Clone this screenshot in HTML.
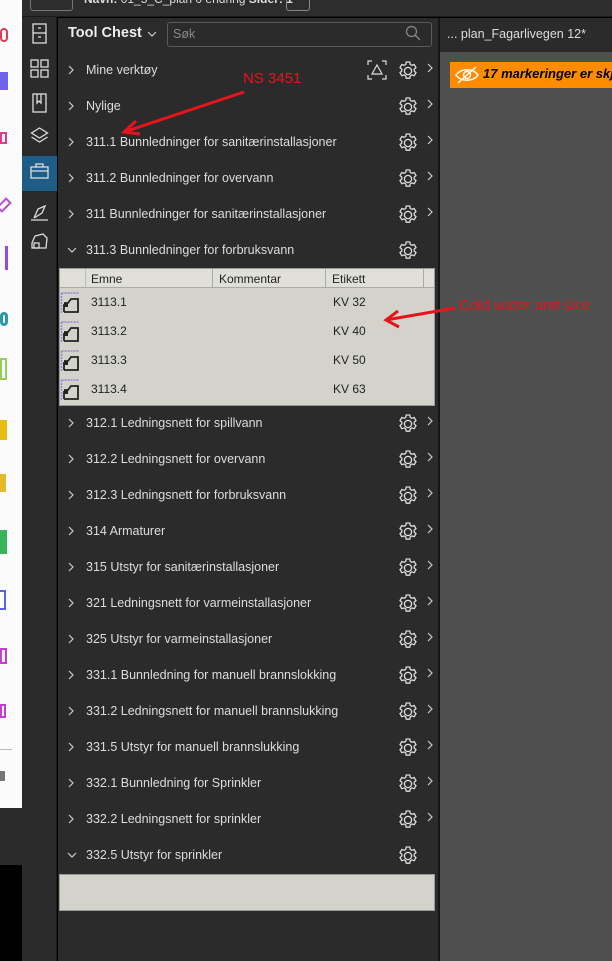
<!DOCTYPE html>
<html><head><meta charset="utf-8"><style>
*{margin:0;padding:0;box-sizing:border-box}
body{width:612px;height:961px;overflow:hidden;background:#000;font-family:"Liberation Sans",sans-serif;position:relative}
.a{position:absolute}
.row{position:absolute;left:58px;width:380px;height:36px;color:#ddd;font-size:12.5px;line-height:36px}
.row .c{position:absolute;left:9px;top:13px}
.row .t{position:absolute;left:28px}
.row svg.g{position:absolute;left:340px;top:9px}
.row .r{position:absolute;left:368px;top:11px}
.tr{position:absolute;left:59px;width:375px;height:29px;font-size:12px;color:#222;line-height:29px}
</style></head><body>
<svg width="0" height="0" style="position:absolute"><defs>
<g id="gear" fill="none" stroke="#ddd" stroke-width="1.3"><path d="M8.2 1h3.6l.5 2.4 1.6.9 2.3-.8 1.8 3.1-1.8 1.6v1.8l1.8 1.6-1.8 3.1-2.3-.8-1.6.9-.5 2.4H8.2l-.5-2.4-1.6-.9-2.3.8-1.8-3.1 1.8-1.6V8.2L2 6.6l1.8-3.1 2.3.8 1.6-.9z"/><circle cx="10" cy="10" r="3.6"/></g>
<path id="chr" d="M2 1l4 4-4 4" fill="none" stroke="#ccc" stroke-width="1.2"/>
<path id="chd" d="M1 3l4 4 4-4" fill="none" stroke="#ccc" stroke-width="1.2"/>
</defs></svg>
<!-- left white strip -->
<div class="a" style="left:0;top:0;width:22px;height:808px;background:#fbfbfb"></div>
<div class="a" style="left:0;top:808px;width:22px;height:57px;background:#2b2b2b"></div>
<div class="a" style="left:0;top:28px;width:8px;height:14px;border:2px solid #e23a55;border-radius:5px"></div>
<div class="a" style="left:0;top:72px;width:8px;height:18px;background:#6e62e8"></div>
<div class="a" style="left:0;top:132px;width:7px;height:12px;border:2px solid #e03c8a"></div>
<div class="a" style="left:0;top:198px;width:8px;height:14px;border:2px solid #b44bd6;transform:rotate(45deg)"></div>
<div class="a" style="left:0;top:246px;width:8px;height:24px;border-right:3px solid #9a4bd8"></div>
<div class="a" style="left:0;top:312px;width:8px;height:14px;border:3px solid #2a9aa8;border-radius:6px"></div>
<div class="a" style="left:0;top:358px;width:7px;height:22px;border:2px solid #8fcf5a"></div>
<div class="a" style="left:0;top:420px;width:7px;height:20px;background:#e8be10"></div>
<div class="a" style="left:0;top:474px;width:6px;height:18px;background:#e6b82a"></div>
<div class="a" style="left:0;top:530px;width:7px;height:24px;background:#38b35a"></div>
<div class="a" style="left:0;top:590px;width:6px;height:20px;border:2px solid #5a63e8;border-left:0"></div>
<div class="a" style="left:0;top:648px;width:7px;height:16px;border:2px solid #c040d0"></div>
<div class="a" style="left:0;top:704px;width:6px;height:14px;border:2px solid #c040d0"></div>
<div class="a" style="left:0;top:749px;width:12px;height:1px;background:#bbb"></div>
<div class="a" style="left:0;top:771px;width:5px;height:10px;background:#777"></div>

<!-- icon bar -->
<div class="a" style="left:22px;top:0;width:35px;height:961px;background:#2b2b2b;border-right:1px solid #1b1b1b"></div>
<div class="a" style="left:22px;top:156px;width:35px;height:35px;background:#1d5d86"></div>
<svg class="a" style="left:22px;top:18px" width="35" height="240" fill="none" stroke="#ddd" stroke-width="1.3">
<rect x="11" y="6" width="13" height="19"/><line x1="11" y1="15" x2="24" y2="15"/><line x1="16" y1="10" x2="19" y2="10"/><line x1="16" y1="19" x2="19" y2="19"/>
<rect x="9" y="42" width="7" height="7"/><rect x="19" y="42" width="7" height="7"/><rect x="9" y="52" width="7" height="7"/><rect x="19" y="52" width="7" height="7"/>
<rect x="11" y="76" width="13" height="18"/><path d="M15 76v9l2-2 2 2v-9"/>
<path d="M17.5 110l8 5-8 5-8-5z"/><path d="M9.5 119l8 5 8-5"/>
<rect x="9" y="149" width="17" height="11"/><path d="M14 149v-3h7v3M9 153h17"/>
<path d="M12 200l4-9 7-3-3 7-8 5M9 202h17"/>
<path d="M10 225l3-7 8-2 4 4-1 10-14 0z"/><rect x="12" y="225" width="5" height="5"/>
</svg>

<!-- top bar -->
<div class="a" style="left:22px;top:0;width:590px;height:17px;background:#2d2d2d;border-bottom:1px solid #1a1a1a;overflow:hidden">
<div class="a" style="left:8px;top:-6px;width:43px;height:17px;border:1px solid #777;border-radius:3px"></div>
<div class="a" style="left:62px;top:-8px;color:#ddd;font-size:12px;font-weight:bold;white-space:nowrap">Navn: <span style="font-weight:normal">01_5_C_plan 0 endring</span> Sider: 1</div>
<div class="a" style="left:264px;top:-6px;width:24px;height:17px;border:1px solid #888;border-radius:3px"></div>
</div>

<!-- main panel -->
<div class="a" style="left:58px;top:18px;width:380px;height:943px;background:#2b2b2b"></div>
<div class="a" style="left:438px;top:18px;width:2px;height:943px;background:#161616"></div>
<div class="a" style="left:68px;top:25px;color:#eee;font-size:14.5px;font-weight:bold">Tool Chest</div>
<svg class="a" style="left:147px;top:29px" width="10" height="10"><use href="#chd"/></svg>
<div class="a" style="left:167px;top:22px;width:265px;height:25px;border:1px solid #5a5a5a;border-radius:3px;background:#2b2b2b"></div>
<div class="a" style="left:173px;top:27px;color:#888;font-size:12.5px">Søk</div>
<svg class="a" style="left:405px;top:25px" width="16" height="16" fill="none" stroke="#888" stroke-width="1.3"><circle cx="6.5" cy="6.5" r="5"/><path d="M10 10l5 5"/></svg>

<!-- right panel -->
<div class="a" style="left:440px;top:18px;width:172px;height:34px;background:#2b2b2b"></div>
<div class="a" style="left:447px;top:27px;color:#ddd;font-size:12.5px">... plan_Fagarlivegen 12*</div>
<div class="a" style="left:440px;top:52px;width:172px;height:909px;background:#4f4f4f"></div>
<div class="a" style="left:450px;top:62px;width:162px;height:26px;background:#ff8c00"></div>
<svg class="a" style="left:454px;top:65px" width="26" height="20" fill="none" stroke="#fff" stroke-width="1.5"><path d="M2 10c5-7 17-7 22 0c-5 7-17 7-22 0z"/><circle cx="13" cy="10" r="3.5"/><path d="M4 18L22 2"/></svg>
<div class="a" style="left:483px;top:66px;color:#000;font-size:13px;font-weight:bold;font-style:italic;white-space:nowrap">17 markeringer er skjult</div>

<div class="row" style="top:52px"><svg class="c" width="10" height="10"><use href="#chr"/></svg><span class="t">Mine verktøy</span>
<svg class="a" style="left:308px;top:7px" width="22" height="22" fill="none" stroke="#ddd" stroke-width="1.2"><path d="M2 6V2h4M16 2h4v4M2 16v4h4M20 16v4h-4M11 6l5 9H6z"/></svg>
<svg class="g" width="20" height="20"><use href="#gear"/></svg><svg class="r" width="10" height="10"><use href="#chr"/></svg></div>
<div class="row" style="top:88px"><svg class="c" width="10" height="10"><use href="#chr"/></svg><span class="t">Nylige</span><svg class="g" width="20" height="20"><use href="#gear"/></svg><svg class="r" width="10" height="10"><use href="#chr"/></svg></div>
<div class="row" style="top:124px"><svg class="c" width="10" height="10"><use href="#chr"/></svg><span class="t">311.1 Bunnledninger for sanitærinstallasjoner</span><svg class="g" width="20" height="20"><use href="#gear"/></svg><svg class="r" width="10" height="10"><use href="#chr"/></svg></div>
<div class="row" style="top:160px"><svg class="c" width="10" height="10"><use href="#chr"/></svg><span class="t">311.2 Bunnledninger for overvann</span><svg class="g" width="20" height="20"><use href="#gear"/></svg><svg class="r" width="10" height="10"><use href="#chr"/></svg></div>
<div class="row" style="top:196px"><svg class="c" width="10" height="10"><use href="#chr"/></svg><span class="t">311 Bunnledninger for sanitærinstallasjoner</span><svg class="g" width="20" height="20"><use href="#gear"/></svg><svg class="r" width="10" height="10"><use href="#chr"/></svg></div>
<div class="row" style="top:232px"><svg class="c" width="10" height="10"><use href="#chd"/></svg><span class="t">311.3 Bunnledninger for forbruksvann</span><svg class="g" width="20" height="20"><use href="#gear"/></svg></div>

<!-- table -->
<div class="a" style="left:59px;top:268px;width:376px;height:138px;background:#d3d3cb;border:1px solid #999"></div>
<div class="a" style="left:60px;top:269px;width:374px;height:19px;background:#e0e0d8;border-bottom:1px solid #aaa"></div>
<div class="a" style="left:85px;top:269px;width:1px;height:19px;background:#bbb"></div>
<div class="a" style="left:212px;top:269px;width:1px;height:19px;background:#aaa"></div>
<div class="a" style="left:325px;top:269px;width:1px;height:19px;background:#aaa"></div>
<div class="a" style="left:423px;top:269px;width:1px;height:19px;background:#aaa"></div>
<div class="a" style="left:91px;top:272px;font-size:12px;color:#222">Emne</div>
<div class="a" style="left:219px;top:272px;font-size:12px;color:#222">Kommentar</div>
<div class="a" style="left:332px;top:272px;font-size:12px;color:#222">Etikett</div>
<div class="tr" style="top:288px"><span class="a" style="left:32px">3113.1</span><span class="a" style="left:274px">KV 32</span></div>
<div class="tr" style="top:317px"><span class="a" style="left:32px">3113.2</span><span class="a" style="left:274px">KV 40</span></div>
<div class="tr" style="top:346px"><span class="a" style="left:32px">3113.3</span><span class="a" style="left:274px">KV 50</span></div>
<div class="tr" style="top:375px"><span class="a" style="left:32px">3113.4</span><span class="a" style="left:274px">KV 63</span></div>
<svg class="a" style="left:60px;top:292px" width="22" height="110" fill="none">
<g id="ic"><path d="M1.5 1h18M1.5 1v20" stroke="#9b7fd8" stroke-width="1.5" stroke-dasharray="2 1"/><path d="M4 20h14V7h-7l-3 4H4" stroke="#222" stroke-width="1.8"/><path d="M4 12v8" stroke="#222" stroke-width="1.8"/><rect x="4" y="11" width="4" height="4" fill="#222"/></g>
<use href="#ic" y="29"/><use href="#ic" y="58"/><use href="#ic" y="87"/>
</svg>

<div class="row" style="top:405px"><svg class="c" width="10" height="10"><use href="#chr"/></svg><span class="t">312.1 Ledningsnett for spillvann</span><svg class="g" width="20" height="20"><use href="#gear"/></svg><svg class="r" width="10" height="10"><use href="#chr"/></svg></div>
<div class="row" style="top:441px"><svg class="c" width="10" height="10"><use href="#chr"/></svg><span class="t">312.2 Ledningsnett for overvann</span><svg class="g" width="20" height="20"><use href="#gear"/></svg><svg class="r" width="10" height="10"><use href="#chr"/></svg></div>
<div class="row" style="top:477px"><svg class="c" width="10" height="10"><use href="#chr"/></svg><span class="t">312.3 Ledningsnett for forbruksvann</span><svg class="g" width="20" height="20"><use href="#gear"/></svg><svg class="r" width="10" height="10"><use href="#chr"/></svg></div>
<div class="row" style="top:513px"><svg class="c" width="10" height="10"><use href="#chr"/></svg><span class="t">314 Armaturer</span><svg class="g" width="20" height="20"><use href="#gear"/></svg><svg class="r" width="10" height="10"><use href="#chr"/></svg></div>
<div class="row" style="top:549px"><svg class="c" width="10" height="10"><use href="#chr"/></svg><span class="t">315 Utstyr for sanitærinstallasjoner</span><svg class="g" width="20" height="20"><use href="#gear"/></svg><svg class="r" width="10" height="10"><use href="#chr"/></svg></div>
<div class="row" style="top:585px"><svg class="c" width="10" height="10"><use href="#chr"/></svg><span class="t">321 Ledningsnett for varmeinstallasjoner</span><svg class="g" width="20" height="20"><use href="#gear"/></svg><svg class="r" width="10" height="10"><use href="#chr"/></svg></div>
<div class="row" style="top:621px"><svg class="c" width="10" height="10"><use href="#chr"/></svg><span class="t">325 Utstyr for varmeinstallasjoner</span><svg class="g" width="20" height="20"><use href="#gear"/></svg><svg class="r" width="10" height="10"><use href="#chr"/></svg></div>
<div class="row" style="top:657px"><svg class="c" width="10" height="10"><use href="#chr"/></svg><span class="t">331.1 Bunnledning for manuell brannslokking</span><svg class="g" width="20" height="20"><use href="#gear"/></svg><svg class="r" width="10" height="10"><use href="#chr"/></svg></div>
<div class="row" style="top:693px"><svg class="c" width="10" height="10"><use href="#chr"/></svg><span class="t">331.2 Ledningsnett for manuell brannslukking</span><svg class="g" width="20" height="20"><use href="#gear"/></svg><svg class="r" width="10" height="10"><use href="#chr"/></svg></div>
<div class="row" style="top:729px"><svg class="c" width="10" height="10"><use href="#chr"/></svg><span class="t">331.5 Utstyr for manuell brannslukking</span><svg class="g" width="20" height="20"><use href="#gear"/></svg><svg class="r" width="10" height="10"><use href="#chr"/></svg></div>
<div class="row" style="top:765px"><svg class="c" width="10" height="10"><use href="#chr"/></svg><span class="t">332.1 Bunnledning for Sprinkler</span><svg class="g" width="20" height="20"><use href="#gear"/></svg><svg class="r" width="10" height="10"><use href="#chr"/></svg></div>
<div class="row" style="top:801px"><svg class="c" width="10" height="10"><use href="#chr"/></svg><span class="t">332.2 Ledningsnett for sprinkler</span><svg class="g" width="20" height="20"><use href="#gear"/></svg><svg class="r" width="10" height="10"><use href="#chr"/></svg></div>
<div class="row" style="top:837px"><svg class="c" width="10" height="10"><use href="#chd"/></svg><span class="t">332.5 Utstyr for sprinkler</span><svg class="g" width="20" height="20"><use href="#gear"/></svg></div>
<div class="a" style="left:59px;top:874px;width:376px;height:37px;background:#d3d3cb;border:1px solid #999"></div>

<!-- annotations -->
<svg class="a" style="left:0;top:0" width="612" height="961" fill="none" stroke="#e8141c" stroke-width="3">
<path d="M244 92L124 132"/><path d="M136 121L124 132 140 134"/>
<path d="M455 308L386 320"/><path d="M398 311L386 320 399 327"/>
</svg>
<div class="a" style="left:243px;top:70px;color:#e8141c;font-size:15px">NS 3451</div>
<div class="a" style="left:459px;top:297px;color:#e8141c;font-size:15px;white-space:nowrap">Cold water and sice</div>
</body></html>
